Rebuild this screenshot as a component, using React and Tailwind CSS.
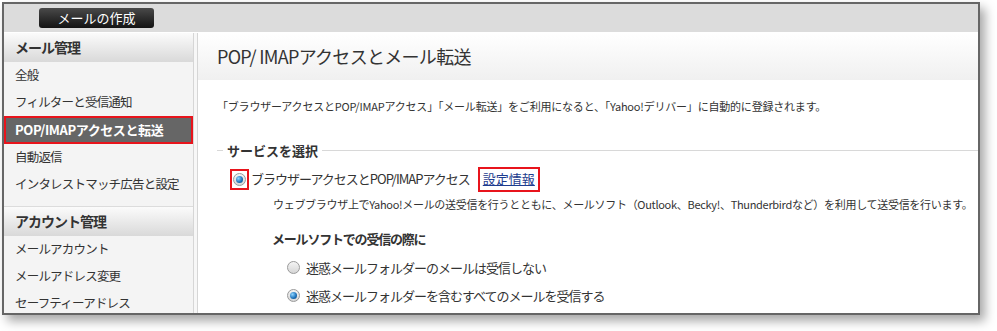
import React from "react";

const jp = { fontFamily: '"Noto Sans CJK JP", "Noto Sans", sans-serif' };

const Radio = ({ checked }) => (
  <span className="inline-flex h-[13px] w-[13px] shrink-0 items-center justify-center rounded-full border border-[#9a9a9a] bg-gradient-to-b from-[#f4f4f4] to-[#d6d6d6]">
    {checked && (
      <span className="h-[7px] w-[7px] rounded-full bg-[radial-gradient(circle_at_35%_35%,#8fd4ff,#1a6fb8_60%,#0b3f73)]" />
    )}
  </span>
);

const menuMail = ["全般", "フィルターと受信通知"];
const menuMail2 = ["自動返信", "インタレストマッチ広告と設定"];
const menuAccount = ["メールアカウント", "メールアドレス変更", "セーフティーアドレス"];

const SideHeader = ({ children }) => (
  <div className="flex h-[29px] items-center bg-gradient-to-b from-[#fbfbfb] to-[#d9d9d9] pl-[11px] text-[14px] font-bold tracking-[-1px] text-[#333]">
    {children}
  </div>
);

const SideItem = ({ children }) => (
  <div className="flex h-[27px] items-center whitespace-nowrap pl-[11px] text-[12.5px] tracking-[-0.8px] text-[#333]">
    {children}
  </div>
);

export default function App() {
  return (
    <div className="h-[331px] w-[997px] bg-white pl-[2px] pt-[2px]" style={jp}>
      <div className="flex h-[313px] w-[978px] flex-col overflow-hidden border-2 border-[#666] shadow-[5px_6px_10px_rgba(0,0,0,0.35)]">
        {/* top bar */}
        <div className="flex h-[29px] shrink-0 items-center border-b border-white bg-[#dcdcdc] pl-[35px]">
          <button className="flex h-[20px] w-[115px] items-center justify-center rounded-[3px] bg-gradient-to-b from-[#4a4a4a] to-[#141414] text-[13px] text-white">
            メールの作成
          </button>
        </div>

        <div className="flex flex-1">
          {/* sidebar */}
          <div className="w-[190px] shrink-0 border-r border-[#d6d6d6] bg-[#f4f4f4]">
            <SideHeader>メール管理</SideHeader>
            {menuMail.map((m) => (
              <SideItem key={m}>{m}</SideItem>
            ))}
            <div className="flex h-[28px] items-center border-2 border-[#e8141c] bg-[#666] pl-[9px] text-[13px] font-bold tracking-[-0.4px] text-white">
              POP/IMAPアクセスと転送
            </div>
            {menuMail2.map((m) => (
              <SideItem key={m}>{m}</SideItem>
            ))}
            <div className="h-[9px] border-b border-[#dcdcdc]" />
            <SideHeader>アカウント管理</SideHeader>
            {menuAccount.map((m) => (
              <SideItem key={m}>{m}</SideItem>
            ))}
          </div>

          <div className="w-[3px] shrink-0 bg-[#f7f7f7]" />

          {/* main */}
          <div className="flex-1 border-l border-[#d6d6d6] bg-white">
            <div className="flex h-[47px] items-center bg-gradient-to-b from-white to-[#f0f0f0] pl-[19px] text-[18px] tracking-[-0.7px] text-[#333]">
              POP/ IMAPアクセスとメール転送
            </div>

            <div className="whitespace-nowrap pl-[19px] pt-[18px] text-[11px] tracking-[-0.2px] text-[#333]">
              「ブラウザーアクセスとPOP/IMAPアクセス」「メール転送」をご利用になると、「Yahoo!デリバー」に自動的に登録されます。
            </div>

            <div className="mt-[26px] pl-[19px]">
              <div className="flex items-center">
                <span className="h-px w-[6px] bg-[#d8d8d8]" />
                <span className="px-[4px] text-[13px] font-bold leading-[20px] text-[#333]">サービスを選択</span>
                <span className="h-px flex-1 bg-[#d8d8d8]" />
              </div>

              <div className="mt-[6px] flex items-center pl-[13px]">
                <span className="flex h-[21px] w-[19px] items-center justify-center border-2 border-[#e8141c]">
                  <Radio checked />
                </span>
                <span className="ml-[2px] whitespace-nowrap text-[13px] tracking-[-1px] text-[#333]">
                  ブラウザーアクセスとPOP/IMAPアクセス
                </span>
                <span className="ml-[8px] flex h-[25px] items-center border-2 border-[#e8141c] px-[3px] text-[13px] text-[#1d3c8e] underline">
                  設定情報
                </span>
              </div>

              <div className="mt-[4px] whitespace-nowrap pl-[56px] text-[11px] tracking-[-0.3px] text-[#333]">
                ウェブブラウザ上でYahoo!メールの送受信を行うとともに、メールソフト（Outlook、Becky!、Thunderbirdなど）を利用して送受信を行います。
              </div>

              <div className="mt-[17px] pl-[55px] text-[13px] font-bold tracking-[-1.2px] text-[#333]">
                メールソフトでの受信の際に
              </div>

              <div className="mt-[9px] flex items-center pl-[70px] text-[13px] tracking-[-1px] text-[#333]">
                <Radio />
                <span className="ml-[6px]">迷惑メールフォルダーのメールは受信しない</span>
              </div>
              <div className="mt-[9px] flex items-center pl-[70px] text-[13px] tracking-[-1px] text-[#333]">
                <Radio checked />
                <span className="ml-[6px]">迷惑メールフォルダーを含むすべてのメールを受信する</span>
              </div>
            </div>
          </div>
        </div>
      </div>
    </div>
  );
}
